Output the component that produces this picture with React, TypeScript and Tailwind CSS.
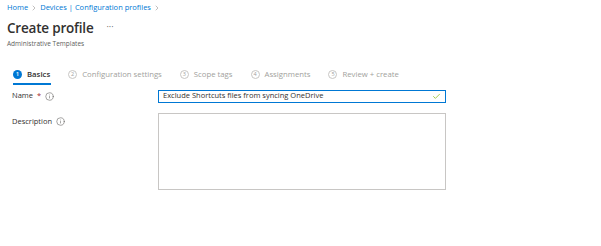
import { ChevronRight, Check, Info } from 'lucide-react';

const steps = [
    { n: 2, label: 'Configuration settings' },
    { n: 3, label: 'Scope tags' },
    { n: 4, label: 'Assignments' },
    { n: 5, label: 'Review + create' },
];

function InfoDot() {
    return <Info size={9} strokeWidth={1.5} className="text-[#605e5c]" />;
}

export default function App() {
    return (
        <div className="w-[601px] h-[246px] bg-white text-[#323130] font-['Segoe_UI','Open_Sans',sans-serif] overflow-hidden">
            <div className="px-[7px] pt-[3px]">
                <nav className="flex items-center gap-[2px] text-[7.5px] text-[#0078d4] h-[10px]">
                    <span>Home</span>
                    <ChevronRight size={8} className="text-[#a19f9d]" />
                    <span>Devices | Configuration profiles</span>
                    <ChevronRight size={8} className="text-[#a19f9d]" />
                </nav>

                <div className="flex items-center mt-[9px] h-[14px]">
                    <h1 className="text-[13.5px] font-semibold leading-none tracking-[-0.2px]">Create profile</h1>
                    <span className="ml-[13px] text-[9px] text-[#605e5c] -mt-[4px]">···</span>
                </div>
                <p className="text-[6.5px] text-[#605e5c] leading-none mt-[5px]">Administrative Templates</p>
            </div>

            <div className="flex items-center ml-[13px] mt-[20px] h-[14px] text-[7.75px]">
                <div className="flex items-center gap-[5px]">
                    <span className="w-[9px] h-[9px] rounded-full bg-[#0078d4] text-white text-[6px] flex items-center justify-center font-semibold">1</span>
                    <span className="font-semibold">Basics</span>
                </div>
                {steps.map((s) => (
                    <div key={s.n} className="flex items-center gap-[5px] ml-[18px] text-[#a19f9d]">
                        <span className="w-[9px] h-[9px] rounded-full border border-[#c8c6c4] text-[5.5px] flex items-center justify-center">{s.n}</span>
                        <span>{s.label}</span>
                    </div>
                ))}
            </div>
            <div className="ml-[13px] w-[38px] h-[2px] bg-[#0078d4] mt-[1px]" />

            <div className="grid grid-cols-[146px_288px] ml-[12px] mt-[5px] gap-y-[10px] text-[7.5px]">
                <div className="flex items-center gap-[4px] h-[13px]">
                    <span>Name</span>
                    <span className="text-[#a4262c]">*</span>
                    <InfoDot />
                </div>
                <div className="h-[13px] border border-[#0078d4] flex items-center px-[4px]">
                    <span className="flex-1">Exclude Shortcuts files from syncing OneDrive</span>
                    <Check size={9} className="text-[#8cbd18]" />
                </div>

                <div className="flex items-start gap-[4px] pt-[3px]">
                    <span>Description</span>
                    <span className="mt-[1px]"><InfoDot /></span>
                </div>
                <div className="h-[77px] border border-[#c8c6c4]" />
            </div>
        </div>
    );
}
